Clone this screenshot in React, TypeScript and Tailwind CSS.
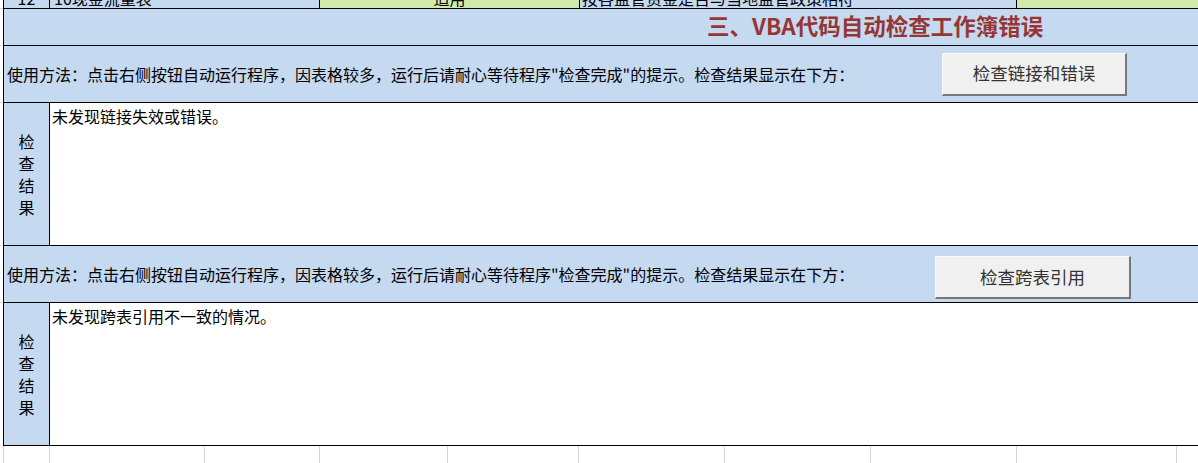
import React from "react";

const font = { fontFamily: '"Noto Sans CJK SC", "Noto Sans", sans-serif' };

function Btn({ label, className }: { label: string; className: string }) {
  return (
    <div
      className={
        "flex items-center justify-center bg-[#f0f0f0] border-t border-l border-[#fafafa] border-r-2 border-b-2 border-r-[#777777] border-b-[#777777] text-[17.5px] text-[#333333] " +
        className
      }
    >
      {label}
    </div>
  );
}

function UsageRow({ btn }: { btn: React.ReactNode }) {
  return (
    <div className="flex h-[57px] border-b border-black bg-[#c5d9f1]">
      <div className="flex items-center pl-[3px] text-[16px] text-black whitespace-nowrap">
        使用方法：点击右侧按钮自动运行程序，因表格较多，运行后请耐心等待程序"检查完成"的提示。检查结果显示在下方：
      </div>
      <div className="flex-1" />
      {btn}
    </div>
  );
}

function ResultRow({ text }: { text: string }) {
  return (
    <div className="flex h-[143px] border-b border-black">
      <div className="w-[46px] shrink-0 border-r border-black bg-[#c5d9f1] flex flex-col items-center justify-center text-[16px] leading-[22px] text-black">
        <span>检</span>
        <span>查</span>
        <span>结</span>
        <span>果</span>
      </div>
      <div className="flex-1 bg-white pl-[2px] pt-[1px] text-[16px] leading-[24px] text-black">
        {text}
      </div>
    </div>
  );
}

export default function App() {
  const bottomCells = [4, 46, 155, 115, 128, 131, 146, 146, 146, 160];
  return (
    <div className="w-[1198px] h-[463px] bg-white overflow-hidden" style={font}>
      <div className="flex">
        {/* margin column with faint gridlines */}
        <div className="w-[3px] shrink-0 flex flex-col">
          <div className="h-[9px] border-b border-[#d4d4d4]" />
          <div className="h-[37px] border-b border-[#d4d4d4]" />
          <div className="h-[57px] border-b border-[#d4d4d4]" />
          <div className="h-[143px] border-b border-[#d4d4d4]" />
          <div className="h-[57px] border-b border-[#d4d4d4]" />
          <div className="h-[143px]" />
        </div>
        <div className="flex-1 border-l border-black flex flex-col">
          {/* cut-off top row */}
          <div className="flex h-[9px] border-b border-black overflow-hidden text-[16px] leading-[20px] text-black">
            <div className="w-[46px] shrink-0 border-r border-black bg-[#c5d9f1] overflow-hidden">
              <div className="mt-[-12px] text-center">12</div>
            </div>
            <div className="w-[270px] shrink-0 border-r border-black bg-[#c5d9f1] overflow-hidden">
              <div className="mt-[-12px] pl-[4px] whitespace-nowrap">10现金流量表</div>
            </div>
            <div className="w-[260px] shrink-0 border-r border-black bg-[#d0eaad] overflow-hidden">
              <div className="mt-[-12px] text-center">适用</div>
            </div>
            <div className="w-[437px] shrink-0 border-r border-black bg-[#c5d9f1] overflow-hidden">
              <div className="mt-[-12px] pl-[2px] whitespace-nowrap">按各监管资金是否与当地监管政策相符</div>
            </div>
            <div className="flex-1 bg-[#d0eaad]" />
          </div>
          {/* title row */}
          <div className="flex items-center h-[37px] border-b border-black bg-[#c5d9f1] pl-[703px] pb-[4px]">
            <span className="text-[22.5px] font-bold text-[#963634] whitespace-nowrap leading-none">
              三、VBA代码自动检查工作簿错误
            </span>
          </div>
          <UsageRow btn={<Btn label="检查链接和错误" className="w-[185px] h-[43px] self-center mr-[71px]" />} />
          <ResultRow text="未发现链接失效或错误。" />
          <UsageRow btn={<Btn label="检查跨表引用" className="w-[196px] h-[43px] self-start mt-[10px] mr-[67px]" />} />
          <ResultRow text="未发现跨表引用不一致的情况。" />
        </div>
      </div>
      <div className="flex h-[20px]">
        {bottomCells.map((w, i) => (
          <div key={i} className="shrink-0 border-r border-[#d4d4d4]" style={{ width: w }} />
        ))}
        <div className="flex-1" />
      </div>
    </div>
  );
}
